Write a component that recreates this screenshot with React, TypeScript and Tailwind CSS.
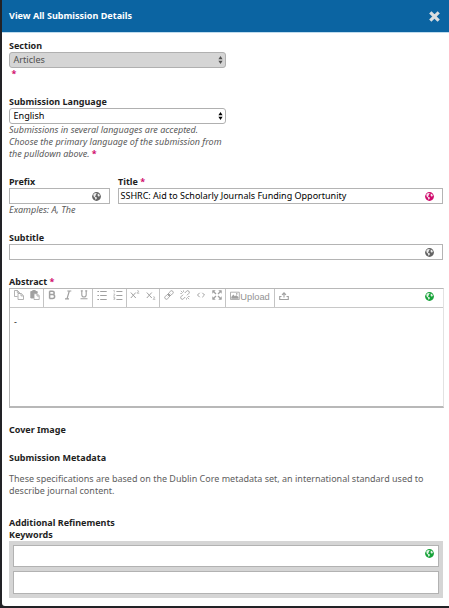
import React from "react";

const Star = () => <span className="font-bold not-italic text-[#d00a6c]">*</span>;

function Label({ children, required }: { children: React.ReactNode; required?: boolean }) {
  return (
    <div className="h-3 whitespace-nowrap font-bold leading-3 text-[#1e1e1e]">
      {children}
      {required && <> <Star /></>}
    </div>
  );
}

function Select({ value, disabled }: { value: string; disabled?: boolean }) {
  return (
    <div
      className={
        "flex h-4 w-[217px] items-center justify-between rounded-[3px] border border-[#b0b0b0] pl-[3.5px] pr-[2px] text-[9.1px] " +
        (disabled ? "bg-[#d5d5d5] text-[#505050]" : "bg-white text-black")
      }
    >
      <span>{value}</span>
      <svg width="5" height="8" viewBox="0 0 5 8" fill="currentColor">
        <path d="M2.5 0 4.6 3.3H.4zM2.5 8 .4 4.7h4.2z" />
      </svg>
    </div>
  );
}

function Globe({ className }: { className: string }) {
  return (
    <svg width="9" height="9" viewBox="0 0 9 9" fill="currentColor" className={className}>
      <circle cx="4.5" cy="4.5" r="4.4" />
      <path
        d="M1.300 2.500 2.600 1.300l1.700-.4.5.8-1 .7.3.8-1.200.9.6.9 1.100.3.500.9-.9.9-.2 1-.8-1.200-.2-1.200L1.600 4.500zM5.800 1.500l1.400.8.7 1.200-.7 1.100-.9-.2-.7-1z"
        fill="white"
        opacity="0.88"
      />
    </svg>
  );
}

function Field({ width, color, value }: { width: string; color: string; value?: string }) {
  return (
    <div className={"flex h-4 items-center justify-between border border-[#b4b4b4] bg-white pl-[1.5px] pr-2 text-black " + width}>
      <span className="whitespace-nowrap">{value}</span>
      <Globe className={color} />
    </div>
  );
}

function Tool({ children }: { children: React.ReactNode }) {
  return (
    <svg
      className="shrink-0"
      width="10"
      height="10"
      viewBox="0 0 10 10"
      fill="none"
      stroke="currentColor"
      strokeWidth="0.9"
    >
      {children}
    </svg>
  );
}

function Group({ width, children }: { width: string; children: React.ReactNode }) {
  return (
    <div className={"flex h-[18px] shrink-0 items-start justify-center gap-[6px] border-r border-[#c4c4c4] pt-px " + width}>
      {children}
    </div>
  );
}

function Toolbar() {
  return (
    <div className="flex h-[19px] border-b border-[#c8c8c8] text-[#a0a0a0]">
      <Group width="w-[34px]">
        <Tool>
          <path d="M3.5 6.5h-3v-6h3l2 2v1M3.3.5v2.2h2M4 3.5h3.3l2.2 2.2v3.8H4zM7 3.7v2.2h2.3" strokeWidth="0.8" />
        </Tool>
        <Tool>
          <path d="M.8 1.5h6.4v1.7H3.5V8H.8zM2.7.5h2.6v2H2.7z" fill="currentColor" />
          <path d="M4 3.7h3.2l2 2v3.8H4zM7 4v2h2" fill="white" strokeWidth="0.8" />
        </Tool>
      </Group>
      <Group width="w-[49px]">
        <Tool>
          <path d="M2.6 1.2v7.4M2.5 1.2h2.8c2.5 0 2.5 3.4 0 3.4H2.8h2.8c2.7 0 2.7 3.9 0 3.9H2.5" strokeWidth="1.5" />
        </Tool>
        <Tool>
          <path d="M4.3 1h4M2 8.8h4M6.3 1 4 8.8" strokeWidth="1.2" />
        </Tool>
        <Tool>
          <path d="M2.8.7v4c0 3 4.4 3 4.4 0v-4M1.8.9h2M6.2.9h2M1.5 8.8h7" strokeWidth="1.1" />
        </Tool>
      </Group>
      <Group width="w-[34px]">
        <Tool>
          <path d="M3.2 1.5h6.5M3.2 5.500h6.500M3.200 9.500h6.500M.4 1.500h1.600M.4 5.500h1.600M.4 9.500h1.600" strokeWidth="1.1" />
        </Tool>
        <Tool>
          <path d="M3.400 1.500h6M3.400 5.500h6M3.400 9.500h6" strokeWidth="1.1" />
          <path d="M.5.5h.8v2M.4 4h1.400v.8L.5 6h1.400M.4 7.400h1.400v2H.4M.8 8.400h1" strokeWidth="0.6" />
        </Tool>
      </Group>
      <Group width="w-[33px]">
        <Tool>
          <path d="m.8 2.500 5 5.500M5.800 2.500l-5 5.500" strokeWidth="1" />
          <path d="M7.200.9c1-.8 2 .3.9 1.300l-1 1h2.200" strokeWidth="0.7" />
        </Tool>
        <Tool>
          <path d="m.8 2.500 5 5.500M5.800 2.500l-5 5.500" strokeWidth="1" />
          <path d="M7.200 7c1-.8 2 .3.9 1.300l-1 1h2.200" strokeWidth="0.7" />
        </Tool>
      </Group>
      <Group width="w-[66px]">
        <Tool>
          <g transform="rotate(-45 5 5)">
            <rect x="-.3" y="3.4" width="5.6" height="3.2" rx="1.6" />
            <rect x="4.7" y="3.4" width="5.6" height="3.2" rx="1.6" />
            <path d="M3.2 5h3.6" />
          </g>
        </Tool>
        <Tool>
          <g transform="rotate(-45 5 5)">
            <path d="M3.8 3.400H1.200a1.600 1.600 0 0 0 0 3.200h2.600M6.200 3.400h2.600a1.600 1.600 0 0 1 0 3.200H6.200" />
          </g>
          <path d="m.8.8 2 2M3.500.4v1.500M.4 3.500h1.500M9.200 9.200l-2-2M6.500 9.600V8.100M9.600 6.500H8.100" strokeWidth="0.8" />
        </Tool>
        <Tool>
          <path d="M3.700 2.800 1.500 5l2.200 2.200M6.300 2.800 8.500 5 6.300 7.200" strokeWidth="1" />
        </Tool>
        <Tool>
          <path d="m1 1 3 3M9 1 6 4M1 9l3-3M9 9 6 6" strokeWidth="1.3" />
          <path d="M.3.3h3.400L.3 3.700zM9.700.3v3.400L6.300.3zM.3 9.700V6.300l3.400 3.400zM9.700 9.700H6.300l3.400-3.400z" fill="currentColor" stroke="none" />
        </Tool>
      </Group>
      <div className="flex h-[18px] w-[49px] shrink-0 items-start justify-center border-r border-[#c4c4c4] pt-[1.5px]">
        <Tool>
          <path d="M.5 1.200h8.800v7.300H.5z" strokeWidth="0.8" />
          <path d="M1.300 7.700V6l2-2.500 1.500 1.800 1.500-1L8.500 6v1.700z" fill="currentColor" stroke="none" />
          <circle cx="6.8" cy="2.9" r=".8" fill="currentColor" stroke="none" />
        </Tool>
        <span className="font-['Liberation_Sans',sans-serif] text-[9.3px] leading-[13px] text-[#929292]">Upload</span>
      </div>
      <div className="flex w-[17px] justify-center pt-[2px]">
        <Tool>
          <path d="M5 6.500V2M3 3.800l2-2 2 2M2.500 5.500H.7v3h8.600v-3H7.500" strokeWidth="1.1" />
        </Tool>
      </div>
      <div className="ml-auto pr-[9px] pt-[3px]">
        <Globe className="text-[#18a33a]" />
      </div>
    </div>
  );
}

export default function App() {
  return (
    <div className="h-[608px] w-[449px] overflow-hidden bg-[#222226] pb-[2px] pl-[1.5px] font-['Noto_Sans',sans-serif] text-[9px] leading-3">
      <div className="flex h-full flex-col rounded-bl-[3px] bg-white">
        <header className="flex h-[33px] shrink-0 items-center justify-between border-b border-[#bfdcee] bg-[#0b64a2] pl-[7.5px] pr-[9px] text-[9.05px] font-bold text-white">
          <h1>View All Submission Details</h1>
          <svg className="mt-px" width="11" height="11" viewBox="0 0 11 11" stroke="#d9dde0" strokeWidth="3.2" strokeLinecap="square">
            <path d="m2.4 2.4 6.2 6.2M8.6 2.4 2.4 8.6" />
          </svg>
        </header>
        <main className="flex flex-col pl-[7.5px] pt-[7px]">
          <Label>Section</Label>
          <Select value="Articles" disabled />
          <div className="h-7 pl-[2.5px]"><Star /></div>
          <Label>Submission Language</Label>
          <Select value="English" />
          <p className="h-[52px] whitespace-nowrap italic text-[#5a5a5a]">
            Submissions in several languages are accepted.<br />
            Choose the primary language of the submission from<br />
            the pulldown above. <Star />
          </p>
          <div className="flex h-14 gap-2">
            <div>
              <Label>Prefix</Label>
              <Field width="w-[101px]" color="text-[#646464]" />
              <p className="italic text-[#5a5a5a]">Examples: A, The</p>
            </div>
            <div>
              <Label required>Title</Label>
              <Field width="w-[325px]" color="text-[#d00a6c]" value="SSHRC: Aid to Scholarly Journals Funding Opportunity" />
            </div>
          </div>
          <Label>Subtitle</Label>
          <Field width="w-[434px]" color="text-[#646464]" />
          <div className="mt-4"><Label required>Abstract</Label></div>
          <div className="h-[120px] w-[435px] border border-b-2 border-[#b8b8b8] border-r-[#e2e2e2]">
            <Toolbar />
            <p className="pl-1 pt-2 text-[#222]">-</p>
          </div>
          <div className="mt-4"><Label>Cover Image</Label></div>
          <div className="mt-4"><Label>Submission Metadata</Label></div>
          <p className="mt-[9px] h-11 whitespace-nowrap text-[#606060]">
            These specifications are based on the Dublin Core metadata set, an international standard used to<br />
            describe journal content.
          </p>
          <Label>Additional Refinements</Label>
          <Label>Keywords</Label>
          <div className="flex h-[57px] w-[434px] flex-col gap-[4px] bg-[#d5d5d5] p-[4px]">
            <div className="flex h-[22px] justify-end border border-[#b2b2b2] bg-white pr-1 pt-[3px]">
              <Globe className="text-[#18a33a]" />
            </div>
            <div className="h-[23px] border border-[#b2b2b2] bg-white" />
          </div>
        </main>
      </div>
    </div>
  );
}
